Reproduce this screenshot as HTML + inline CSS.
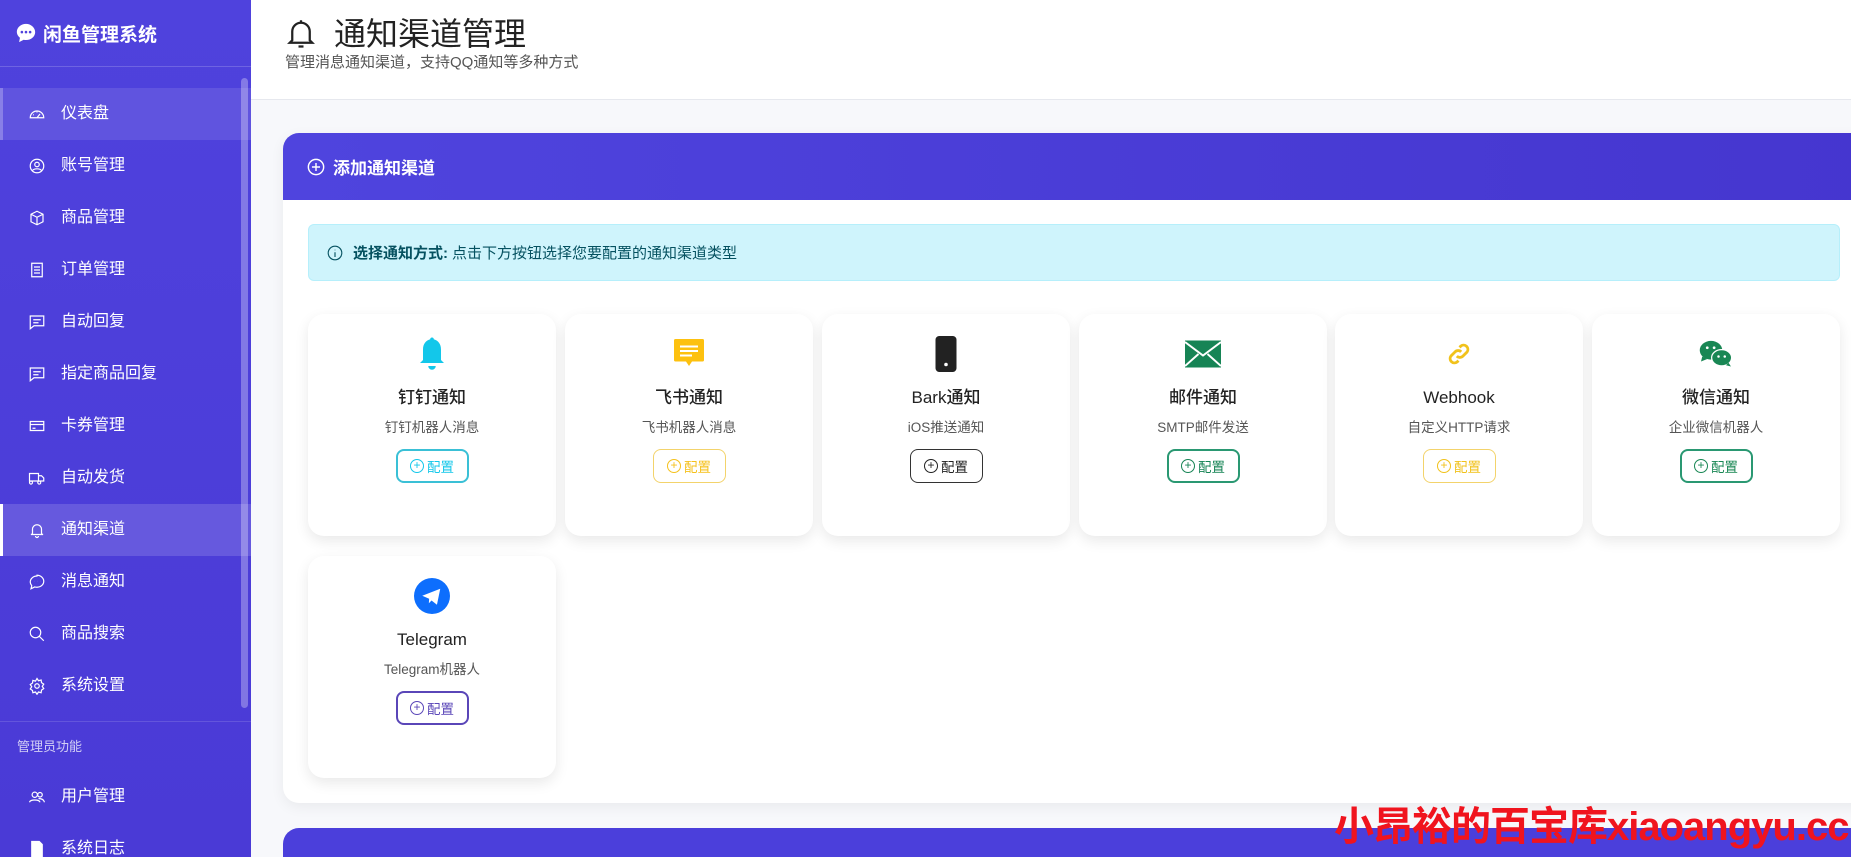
<!DOCTYPE html>
<html><head><meta charset="utf-8"><style>
*{box-sizing:border-box;margin:0;padding:0}
html{width:1851px;height:857px;overflow:hidden}
body{width:1851px;height:857px;overflow:hidden;font-family:"Liberation Sans","Noto Sans CJK SC",sans-serif;background:#f7f8fb;position:relative}
.sb{position:absolute;left:0;top:0;width:251px;height:857px;background:linear-gradient(180deg,#4f42dd,#4a3ad6);color:#fff;overflow:hidden}
.brand{height:67px;border-bottom:1px solid rgba(255,255,255,.18);display:flex;align-items:center;padding-left:15px;font-size:19px;font-weight:bold}
.brand svg{margin-right:6px}
.menu{margin-top:21px}
.it{height:52px;display:flex;align-items:center;padding-left:28px;font-size:16px;position:relative;line-height:20px}
.it svg{width:18px;height:18px;margin-right:15px;fill:none;stroke:#fff;stroke-width:1.6}
.it.hl{background:rgba(255,255,255,.1);border-left:3px solid rgba(255,255,255,.25);padding-left:25px}
.it.act{background:rgba(255,255,255,.15);border-left:3px solid #fff;padding-left:25px}
.sec{border-top:1px solid rgba(255,255,255,.18);margin-top:9px;padding:14px 0 0 17px;font-size:13px;opacity:.75;height:50px}
.scroll{position:absolute;left:241px;top:78px;width:7px;height:630px;background:rgba(255,255,255,.3);border-radius:4px}
.hd{position:absolute;left:251px;top:0;right:0;height:100px;background:#fff;border-bottom:1px solid #e6e8ee}
.hd h1{position:absolute;left:35px;top:12px;font-size:32px;font-weight:normal;color:#222;display:flex;align-items:center;line-height:44px}
.hd h1 svg{margin-right:18px}
.hd p{position:absolute;left:34px;top:53px;font-size:15px;color:#555;line-height:20px}
.card{position:absolute;left:283px;top:133px;width:1600px;height:670px;background:#fff;border-radius:16px;box-shadow:0 4px 14px rgba(0,0,0,.06);overflow:hidden}
.ch{height:67px;background:linear-gradient(90deg,#4f44de,#4536cf);color:#fff;font-size:17px;font-weight:bold;display:flex;align-items:center;padding-left:24px}
.ch svg{margin-right:8px}
.alert{position:absolute;left:25px;top:91px;width:1532px;height:57px;background:#cff4fc;border:1px solid #b6effb;border-radius:6px;color:#055160;font-size:15px;display:flex;align-items:center;padding-left:18px}
.alert b{margin:0 4px 0 10px}
.cc{position:absolute;width:248px;height:222px;background:#fff;border-radius:16px;box-shadow:0 5px 14px rgba(0,0,0,.09);text-align:center}
.ic{height:36px;margin-top:22px;display:flex;justify-content:center;align-items:center}
.nm{font-size:17px;color:#222;margin-top:14px;font-weight:500;height:24px;line-height:24px}
.ds{font-size:13.5px;color:#555;margin-top:9px;height:18px;line-height:18px}
.bt{display:inline-flex;align-items:center;justify-content:center;margin-top:12px;width:73px;height:34px;border:2px solid;border-radius:8px;font-size:13.5px}
.bt i{display:inline-block;width:14px;height:14px;border:1.3px solid;border-radius:50%;margin-right:3px;position:relative;font-style:normal;font-size:12px;line-height:11px}
.card2{position:absolute;left:283px;top:828px;width:1600px;height:29px;background:#4b3fdb;border-radius:16px 16px 0 0}
.wm{position:absolute;left:1334px;top:803px;font-size:40px;line-height:48px;font-weight:bold;color:#f0141e;letter-spacing:-1px;white-space:nowrap}
</style></head><body>
<div class="sb">
<div class="brand"><svg width="22" height="22" viewBox="0 0 24 24"><path d="M12 2C6.5 2 2 5.9 2 10.7c0 2.6 1.3 4.9 3.4 6.5L4.5 22l5-2.6c.8.2 1.7.3 2.5.3 5.5 0 10-3.9 10-8.7S17.5 2 12 2z" fill="#fff"/><circle cx="7.5" cy="11" r="1.4" fill="#4f42dd"/><circle cx="12" cy="11" r="1.4" fill="#4f42dd"/><circle cx="16.5" cy="11" r="1.4" fill="#4f42dd"/></svg>闲鱼管理系统</div>
<div class="menu">
<div class="it hl"><svg viewBox="0 0 24 24"><path d="M3 17a9 9 0 1 1 18 0zM12 17l4-5M7 13h1M12 9v1"/></svg>仪表盘</div>
<div class="it"><svg viewBox="0 0 24 24"><circle cx="12" cy="12" r="9"/><circle cx="12" cy="10" r="3"/><path d="M6 18c2-3 10-3 12 0"/></svg>账号管理</div>
<div class="it"><svg viewBox="0 0 24 24"><path d="M12 3l8 4v10l-8 4-8-4V7zM4 7l8 4 8-4M12 11v10"/></svg>商品管理</div>
<div class="it"><svg viewBox="0 0 24 24"><path d="M5 3h14v18H5zM8 8h8M8 12h8M8 16h8"/></svg>订单管理</div>
<div class="it"><svg viewBox="0 0 24 24"><path d="M3 4h18v13H8l-5 4zM7 9h10M7 13h7"/></svg>自动回复</div>
<div class="it"><svg viewBox="0 0 24 24"><path d="M3 4h18v13H8l-5 4zM7 9h10M7 13h7"/></svg>指定商品回复</div>
<div class="it"><svg viewBox="0 0 24 24"><path d="M3 6h18v12H3zM3 10h18M6 15h4"/></svg>卡券管理</div>
<div class="it"><svg viewBox="0 0 24 24"><path d="M2 6h12v10H2zM14 9h4l3 3v4h-7M6 18a2 2 0 1 0 0 .1M17 18a2 2 0 1 0 0 .1"/></svg>自动发货</div>
<div class="it act"><svg viewBox="0 0 24 24"><path d="M6 17V11a6 6 0 0 1 12 0v6l2 1H4zM10 20a2 2 0 0 0 4 0"/></svg>通知渠道</div>
<div class="it"><svg viewBox="0 0 24 24"><path d="M12 3c5 0 9 3.6 9 8s-4 8-9 8c-1 0-2-.1-3-.4L4 21l1-4c-1.3-1.5-2-3.2-2-5 0-4.4 4-8 9-8z"/><path d="M8 11h.1M12 11h.1M16 11h.1"/></svg>消息通知</div>
<div class="it"><svg viewBox="0 0 24 24"><circle cx="10" cy="10" r="7"/><path d="M15 15l6 6"/></svg>商品搜索</div>
<div class="it"><svg viewBox="0 0 24 24"><circle cx="12" cy="12" r="3"/><path d="M12 2l2 3 3.5-1 .5 3.5 3 2-2 3 2 3-3 2-.5 3.5-3.5-1-2 3-2-3-3.5 1L6 18l-3-2 2-3-2-3 3-2 .5-3.5 3.5 1z"/></svg>系统设置</div>
<div class="sec">管理员功能</div>
<div class="it"><svg viewBox="0 0 24 24"><circle cx="9" cy="9" r="3.5"/><circle cx="16" cy="9" r="3"/><path d="M2 19c1-4 13-4 14 0M14 14c3 0 7 1 8 5"/></svg>用户管理</div>
<div class="it"><svg viewBox="0 0 24 24" style="fill:#fff"><path d="M5 2h10l4 4v16H5z"/></svg>系统日志</div>
</div>
<div class="scroll"></div>
</div>
<div class="hd">
<h1><svg width="30" height="34" viewBox="0 0 24 26" fill="none" stroke="#222" stroke-width="1.8"><path d="M5 18V11a7 7 0 0 1 14 0v7l2 2H3zM10 23h4M12 2v2"/></svg>通知渠道管理</h1>
<p>管理消息通知渠道，支持QQ通知等多种方式</p>
</div>
<div class="card">
<div class="ch"><svg width="18" height="18" viewBox="0 0 20 20" fill="none" stroke="#fff" stroke-width="1.6"><circle cx="10" cy="10" r="8.5"/><path d="M10 5.5v9M5.5 10h9"/></svg>添加通知渠道</div>
<div class="alert"><svg width="16" height="16" viewBox="0 0 20 20" fill="none" stroke="#055160" stroke-width="1.4"><circle cx="10" cy="10" r="8.5"/><path d="M10 9v6M10 6v.5"/></svg><b>选择通知方式:</b>点击下方按钮选择您要配置的通知渠道类型</div>

<div class="cc" style="left:25px;top:181px"><div class="ic"><svg width="30" height="36" viewBox="0 0 20 24"><path d="M10 1c-.8 0-1.2.6-1.2 1.2C5.8 3 4 5.5 4 9v7l-2 2h16l-2-2V9c0-3.5-1.8-6-4.8-6.8C11.2 1.6 10.8 1 10 1zM7.5 20a2.5 2.5 0 0 0 5 0z" fill="#13c7ea"/></svg></div><div class="nm">钉钉通知</div><div class="ds">钉钉机器人消息</div><div class="bt" style="color:#13c7ea;border-color:#3ac0d6"><i>+</i>配置</div></div>
<div class="cc" style="left:282px;top:181px"><div class="ic"><svg width="36" height="36" viewBox="0 0 24 24"><path d="M3 2h18a1 1 0 0 1 1 1v13a1 1 0 0 1-1 1h-7l-2 3-2-3H3a1 1 0 0 1-1-1V3a1 1 0 0 1 1-1z" fill="#fdc10f"/><path d="M6 7h12M6 10h12M6 13h8" stroke="#fff" stroke-width="1.4"/></svg></div><div class="nm">飞书通知</div><div class="ds">飞书机器人消息</div><div class="bt" style="color:#f5c11c;border-color:#f3d36b;border-width:1.5px"><i>+</i>配置</div></div>
<div class="cc" style="left:539px;top:181px"><div class="ic"><svg width="22" height="36" viewBox="0 0 14 24"><rect x="0" y="0" width="14" height="24" rx="2.5" fill="#222"/><circle cx="7" cy="19" r="1.2" fill="#fff"/></svg></div><div class="nm">Bark通知</div><div class="ds">iOS推送通知</div><div class="bt" style="color:#222;border-color:#333;border-width:1.5px"><i>+</i>配置</div></div>
<div class="cc" style="left:796px;top:181px"><div class="ic"><svg width="36" height="28" viewBox="0 0 24 18"><path d="M0 0h24v18H0z" fill="#168455"/><path d="M0 1l12 9 12-9M0 17l9-8M24 17l-9-8" stroke="#fff" stroke-width="1.3" fill="none"/></svg></div><div class="nm">邮件通知</div><div class="ds">SMTP邮件发送</div><div class="bt" style="color:#168455;border-color:#2a9872"><i>+</i>配置</div></div>
<div class="cc" style="left:1052px;top:181px"><div class="ic"><svg width="26" height="26" viewBox="0 0 24 24" fill="none" stroke="#f1c21b" stroke-width="2.6"><path d="M10 14a4 4 0 0 0 5.6 0l3.8-3.8a4 4 0 0 0-5.6-5.6l-1.3 1.3"/><path d="M14 10a4 4 0 0 0-5.6 0l-3.8 3.8a4 4 0 0 0 5.6 5.6l1.3-1.3"/></svg></div><div class="nm">Webhook</div><div class="ds">自定义HTTP请求</div><div class="bt" style="color:#f1c21b;border-color:#f3d36b;border-width:1.5px"><i>+</i>配置</div></div>
<div class="cc" style="left:1309px;top:181px"><div class="ic"><svg width="36" height="30" viewBox="0 0 28 24"><ellipse cx="10" cy="9" rx="9" ry="7.5" fill="#198754"/><path d="M3 14l-1 4 5-2z" fill="#198754"/><ellipse cx="18.5" cy="15" rx="8" ry="6.5" fill="#198754" stroke="#fff" stroke-width="1"/><path d="M24 19l2 3-4-1z" fill="#198754"/><circle cx="7" cy="7" r="1.1" fill="#fff"/><circle cx="12.5" cy="7" r="1.1" fill="#fff"/><circle cx="16" cy="14" r="1" fill="#fff"/><circle cx="21" cy="14" r="1" fill="#fff"/></svg></div><div class="nm">微信通知</div><div class="ds">企业微信机器人</div><div class="bt" style="color:#198754;border-color:#2a9872"><i>+</i>配置</div></div>

<div class="cc" style="left:25px;top:423px"><div class="ic"><svg width="36" height="36" viewBox="0 0 24 24"><circle cx="12" cy="12" r="12" fill="#0d6efd"/><path d="M5.5 11.8l12-4.6-2.2 10.6-3.6-2.8-1.8 1.8.2-3z" fill="#fff"/></svg></div><div class="nm">Telegram</div><div class="ds">Telegram机器人</div><div class="bt" style="color:#5a46b8;border-color:#5a46b8"><i>+</i>配置</div></div>
</div>
<div class="card2"></div>
<div class="wm">小昂裕的百宝库xiaoangyu.cc</div>
</body></html>
